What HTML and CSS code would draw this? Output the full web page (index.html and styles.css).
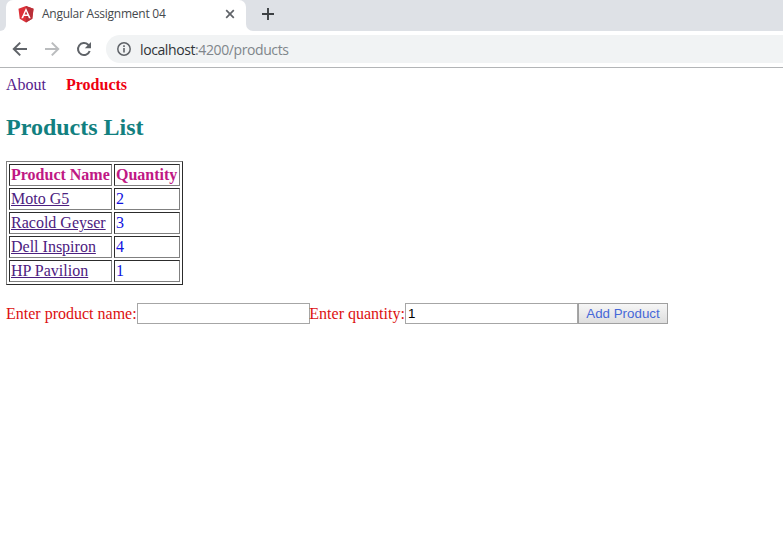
FILE: index.html
```html
<!DOCTYPE html>
<html lang="en">
<head>
<meta charset="utf-8">
<title>Angular Assignment 04</title>
<link rel="stylesheet" href="styles.css">
</head>
<body>
<header class="browser">
  <div class="tabs">
    <div class="tab-before"></div>
    <div class="tab">
      <svg class="favicon" width="16" height="17" viewBox="0 0 16 17"><path fill="#dd3038" d="M8 0l7.500 2.700-1.200 10L8 16.500 1.700 12.700.5 2.700z"/><path fill="#b92f38" d="M8 0l7.500 2.700-1.200 10L8 16.500z"/><path fill="#fff" fill-rule="evenodd" d="M8 2l4.700 10.300h-1.800l-.9-2.300H6l-.9 2.300H3.300zM8 5.200L6.600 8.500h2.800z"/></svg>
      <span class="tab-title">Angular Assignment 04</span>
      <svg class="close" width="10" height="10" viewBox="0 0 10 10"><path d="M1.200 1.200l7.600 7.600M8.800 1.200L1.200 8.800" stroke="#5f6368" stroke-width="1.700"/></svg>
    </div>
    <div class="tab-after">
      <svg width="12" height="12" viewBox="0 0 12 12"><path d="M6 0v12M0 6h12" stroke="#3c4043" stroke-width="1.900"/></svg>
    </div>
  </div>
  <div class="toolbar">
    <svg class="nav-icon" width="16" height="16" viewBox="0 0 16 16"><path d="M15 8H2.200M8.200 1.600L1.800 8l6.400 6.400" fill="none" stroke="#5f6368" stroke-width="2"/></svg>
    <svg class="nav-icon" width="16" height="16" viewBox="0 0 16 16"><path d="M1 8h12.800M7.800 1.600L14.200 8l-6.400 6.400" fill="none" stroke="#babcbe" stroke-width="2"/></svg>
    <svg class="nav-icon" width="16" height="16" viewBox="0 0 16 16"><path d="M13.700 10A6 6 0 1 1 12.200 3.700L13.500 5" fill="none" stroke="#5f6368" stroke-width="2"/><path d="M15 1v6.200H8.800z" fill="#5f6368"/></svg>
    <div class="address">
      <svg width="14" height="14" viewBox="0 0 14 14"><circle cx="7" cy="7" r="6.200" fill="none" stroke="#5f6368" stroke-width="1.500"/><path d="M7 6v4.500M7 3.300v1.700" stroke="#5f6368" stroke-width="1.600"/></svg>
      <span class="url"><span class="host">localhost</span>:4200/products</span>
    </div>
  </div>
</header>
<main class="page">
  <nav class="links"><a class="about">About</a><a class="active">Products</a></nav>
  <h2>Products List</h2>
  <table>
    <tr><th class="name">Product Name</th><th class="qty">Quantity</th></tr>
    <tr><td><a>Moto G5</a></td><td>2</td></tr>
    <tr><td><a>Racold Geyser</a></td><td>3</td></tr>
    <tr><td><a>Dell Inspiron</a></td><td>4</td></tr>
    <tr><td><a>HP Pavilion</a></td><td>1</td></tr>
  </table>
  <form class="add">
    <label class="name-label" for="name">Enter product name:</label><input id="name" type="text">
    <label class="qty-label" for="qty">Enter quantity:</label><input id="qty" type="text" value="1">
    <button type="button">Add Product</button>
  </form>
</main>
</body>
</html>
```
FILE: styles.css
```css
* { box-sizing: border-box; }
body { margin: 0; background: #fff; font: 16px/20px "Liberation Serif", serif; }
svg { display: block; flex: none; }

.browser { font-family: "Open Sans", sans-serif; border-bottom: 1px solid #b3b5b7; height: 68px; }
.tabs { display: flex; height: 31px; background: linear-gradient(#dee1e6 50%, #fff 50%); }
.tab-before { width: 6px; background: #dee1e6; border-bottom-right-radius: 6px; }
.tab { width: 240px; display: flex; align-items: center; padding: 0 11px 3px 12px; background: #fff; border-radius: 7px 7px 0 0; }
.tab-title { margin-left: 8px; font-size: 12px; letter-spacing: -.25px; color: #45494d; white-space: nowrap; }
.close { margin-left: auto; }
.tab-after { flex: 1; background: #dee1e6; border-bottom-left-radius: 7px; padding: 8px 0 0 16px; }
.toolbar { display: flex; align-items: center; height: 36px; padding-left: 12px; }
.nav-icon { margin-right: 16px; }
.address { flex: 1; height: 28px; margin-left: -2px; padding-left: 11px; display: flex; align-items: center; gap: 9px; background: #f1f3f4; border-radius: 14px 0 0 14px; }
.url { padding-top: 1px; font-size: 14px; letter-spacing: -.4px; color: #80868b; white-space: nowrap; }
.host { color: #303438; }

.page { padding: 7px 6px 0; }
.links { display: flex; gap: 20px; }
.about { color: #551a8b; }
.active { color: #ee0010; font-weight: bold; }
h2 { margin: 18px 0 20px; font-size: 24px; line-height: 28px; color: #128080; }
table { border: 1px solid; border-color: #808080 #2c2c2c #2c2c2c #808080; border-spacing: 2px; width: 177px; table-layout: fixed; }
th, td { height: 22px; padding: 1px; line-height: 18px; text-align: left; border: 1px solid; border-color: #2c2c2c #808080 #808080 #2c2c2c; white-space: nowrap; }
th { color: #c01884; }
td { color: #1111e0; }
td a { color: #4c2080; text-decoration: underline; }
.name { width: 103px; }
.qty { width: 66px; }
.add { display: flex; align-items: center; margin-top: 18px; height: 21px; color: #dc1010; white-space: nowrap; }
.name-label { width: 131px; }
.qty-label { width: 95px; text-indent: -.7px; }
input { width: 173px; height: 21px; padding: 1px 2px; border: 1px solid #a6a6a6; font: 13.333px "Liberation Sans", sans-serif; color: #000; background: #fff; }
button { width: 90px; height: 21px; padding: 0; border: 1px solid #a0a0a0; background: linear-gradient(#f6f6f6, #dedede); color: #4668d8; font: 13.333px "Liberation Sans", sans-serif; }
```
